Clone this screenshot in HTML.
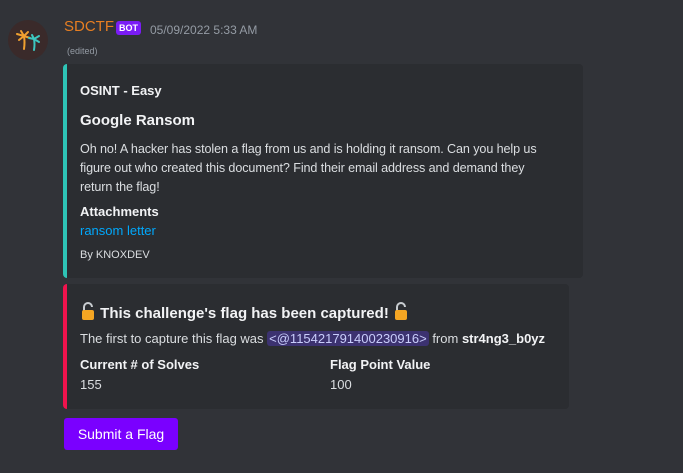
<!DOCTYPE html>
<html><head><meta charset="utf-8"><style>
*{margin:0;padding:0;box-sizing:border-box}
body{width:683px;height:473px;background:#313338;font-family:"Liberation Sans","DejaVu Sans",sans-serif;color:#dbdee1;position:relative;overflow:hidden}
.abs{position:absolute;white-space:nowrap}
.av{left:8px;top:20px;width:40px;height:40px;border-radius:50%;background:#3a2a2a}
.name{left:64px;top:18px;font-size:15px;color:#e67e22}
.bot{left:116px;top:21px;background:#7a1cf5;color:#fff;font-size:9px;font-weight:bold;padding:2px 3px;border-radius:3px;line-height:10px}
.ts{left:150px;top:23px;font-size:12px;color:#949ba4}
.ed{left:67px;top:46px;font-size:9px;color:#949ba4}
.emb{position:absolute;background:#2b2d31;border-radius:4px;border-left:4px solid}
.b{font-weight:bold;color:#f2f3f5}
.lock{display:inline-block;vertical-align:-2px}
</style></head><body>
<div class="abs av"><svg width="40" height="40" viewBox="0 0 40 40"><g stroke="#f0a030" stroke-width="2" fill="none" stroke-linecap="round"><path d="M16 29 Q17 22 16 16"/><path d="M16 16 L9 14 M16 16 L11 20 M16 16 L20 12 M16 16 L22 18 M16 16 L13 11"/></g><g stroke="#3cc8c0" stroke-width="2" fill="none" stroke-linecap="round"><path d="M26 30 Q27 24 26 19"/><path d="M26 19 L21 18 M26 19 L31 16 M26 19 L31 22 M26 19 L24 15"/></g></svg></div>
<div class="abs name">SDCTF</div>
<div class="abs bot">BOT</div>
<div class="abs ts">05/09/2022 5:33 AM</div>
<div class="abs ed">(edited)</div>
<div class="emb" style="left:63px;top:64px;width:520px;height:214px;border-color:#2ec4b6">
 <div class="abs b" style="left:13px;top:19px;font-size:13px">OSINT - Easy</div>
 <div class="abs b" style="left:13px;top:48px;font-size:15px">Google Ransom</div>
 <div style="position:absolute;left:13px;top:76px;width:474px;font-size:12.6px;line-height:19px;color:#dbdee1;letter-spacing:-0.1px">Oh no! A hacker has stolen a flag from us and is holding it ransom. Can you help us figure out who created this document? Find their email address and demand they return the flag!</div>
 <div class="abs b" style="left:13px;top:140px;font-size:13px">Attachments</div>
 <div class="abs" style="left:13px;top:159px;font-size:13px;color:#00a8fc">ransom letter</div>
 <div class="abs" style="left:13px;top:185px;font-size:11px;color:#dbdee1">By KNOXDEV</div>
</div>
<div class="emb" style="left:63px;top:284px;width:506px;height:125px;border-color:#f0134d">
 <div class="abs b" style="left:13px;top:18px;font-size:15px"><svg class="lock" width="16" height="18" viewBox="0 0 16 18"><path d="M4 9 V5 A4 4 0 0 1 12 5" stroke="#c8ccd0" stroke-width="2" fill="none"/><rect x="2" y="8" width="12" height="10" rx="2" fill="#f5a623"/></svg> This challenge's flag has been captured! <svg class="lock" width="16" height="18" viewBox="0 0 16 18"><path d="M4 9 V5 A4 4 0 0 1 12 5" stroke="#c8ccd0" stroke-width="2" fill="none"/><rect x="2" y="8" width="12" height="10" rx="2" fill="#f5a623"/></svg></div>
 <div class="abs" style="left:13px;top:47px;font-size:13px">The first to capture this flag was <span style="background:#3c3270;color:#c9cdfb;padding:0 2px;border-radius:3px">&lt;@115421791400230916&gt;</span> from <b class="b">str4ng3_b0yz</b></div>
 <div class="abs b" style="left:13px;top:73px;font-size:13px">Current # of Solves</div>
 <div class="abs" style="left:13px;top:93px;font-size:13px">155</div>
 <div class="abs b" style="left:263px;top:73px;font-size:13px">Flag Point Value</div>
 <div class="abs" style="left:263px;top:93px;font-size:13px">100</div>
</div>
<div class="abs" style="left:64px;top:418px;width:114px;height:32px;background:#7a00ff;border-radius:3px;color:#fff;font-size:14px;text-align:center;line-height:32px">Submit a Flag</div>
</body></html>
